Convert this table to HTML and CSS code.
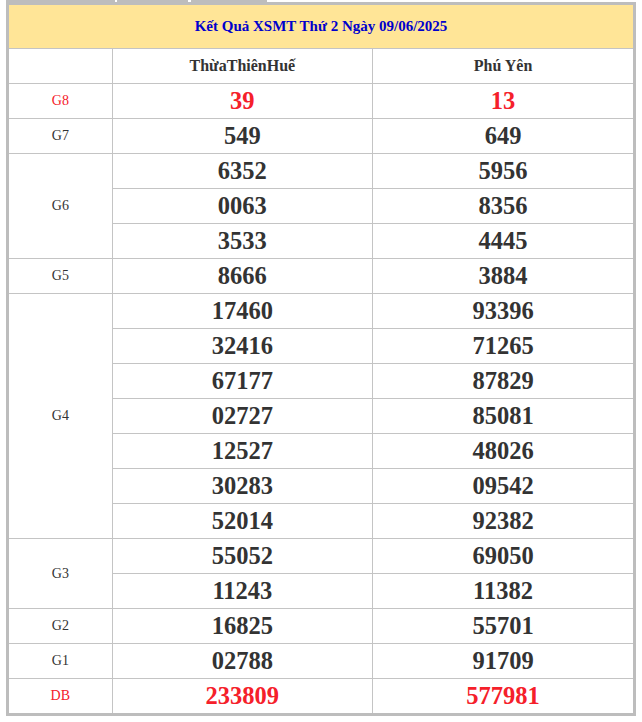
FILE: index.html
```html
<!DOCTYPE html>
<html lang="vi">
<head>
<meta charset="utf-8">
<title>Kết Quả XSMT</title>
<link rel="stylesheet" href="styles.css">
</head>
<body>
<div class="tabs">
  <div class="tab tab-1"></div>
  <div class="tab tab-2"></div>
  <div class="tab tab-3"></div>
</div>
<div class="frame">
  <table class="result">
    <colgroup>
      <col class="c-label">
      <col class="c-prov">
      <col class="c-prov">
    </colgroup>
    <tr class="title-row"><td colspan="3">Kết Quả XSMT Thứ 2 Ngày 09/06/2025</td></tr>
    <tr class="head-row"><td></td><td>ThừaThiênHuế</td><td>Phú Yên</td></tr>
    <tr><td class="lbl red">G8</td><td class="num red">39</td><td class="num red">13</td></tr>
    <tr><td class="lbl">G7</td><td class="num">549</td><td class="num">649</td></tr>
    <tr><td class="lbl" rowspan="3">G6</td><td class="num">6352</td><td class="num">5956</td></tr>
    <tr><td class="num">0063</td><td class="num">8356</td></tr>
    <tr><td class="num">3533</td><td class="num">4445</td></tr>
    <tr><td class="lbl">G5</td><td class="num">8666</td><td class="num">3884</td></tr>
    <tr><td class="lbl" rowspan="7">G4</td><td class="num">17460</td><td class="num">93396</td></tr>
    <tr><td class="num">32416</td><td class="num">71265</td></tr>
    <tr><td class="num">67177</td><td class="num">87829</td></tr>
    <tr><td class="num">02727</td><td class="num">85081</td></tr>
    <tr><td class="num">12527</td><td class="num">48026</td></tr>
    <tr><td class="num">30283</td><td class="num">09542</td></tr>
    <tr><td class="num">52014</td><td class="num">92382</td></tr>
    <tr><td class="lbl" rowspan="2">G3</td><td class="num">55052</td><td class="num">69050</td></tr>
    <tr><td class="num">11243</td><td class="num">11382</td></tr>
    <tr><td class="lbl">G2</td><td class="num">16825</td><td class="num">55701</td></tr>
    <tr><td class="lbl">G1</td><td class="num">02788</td><td class="num">91709</td></tr>
    <tr><td class="lbl red">DB</td><td class="num red">233809</td><td class="num red">577981</td></tr>
  </table>
</div>
</body>
</html>
```
FILE: styles.css
```css
html, body {
  margin: 0;
  padding: 0;
  background: #fff;
}
body {
  font-family: "Liberation Serif", "Times New Roman", serif;
  color: #333;
}
.tabs {
  display: flex;
  height: 2px;
  padding-left: 6px;
}
.tab {
  height: 2px;
  background: #bdbdbd;
}
.tab-1 { width: 109px; }
.tab-2 { width: 71px; margin-left: 2px; }
.tab-3 { width: 76px; margin-left: 3px; }
.frame {
  margin-left: 6px;
  width: 630px;
  box-sizing: border-box;
  border: 3px solid #bdbdbd;
}
.result {
  width: 100%;
  border-collapse: collapse;
  border-style: hidden;
  table-layout: fixed;
}
.c-label { width: 103px; }
.c-prov { width: 260px; }
.result td {
  border: 1px solid #c4c4c4;
  padding: 0;
  height: 34px;
  text-align: center;
  vertical-align: middle;
}
.title-row td {
  height: 43px;
  background: #ffe597;
  color: #0000cc;
  font-weight: bold;
  font-size: 15px;
}
.head-row td {
  font-weight: bold;
  font-size: 16px;
  color: #333;
}
.lbl {
  font-size: 14px;
  color: #333;
}
.result td.num {
  font-size: 24.5px;
  font-weight: bold;
  color: #333;
  padding-bottom: 1px;
  height: 33px;
}
.result td.red {
  color: #f5202a;
}
```
